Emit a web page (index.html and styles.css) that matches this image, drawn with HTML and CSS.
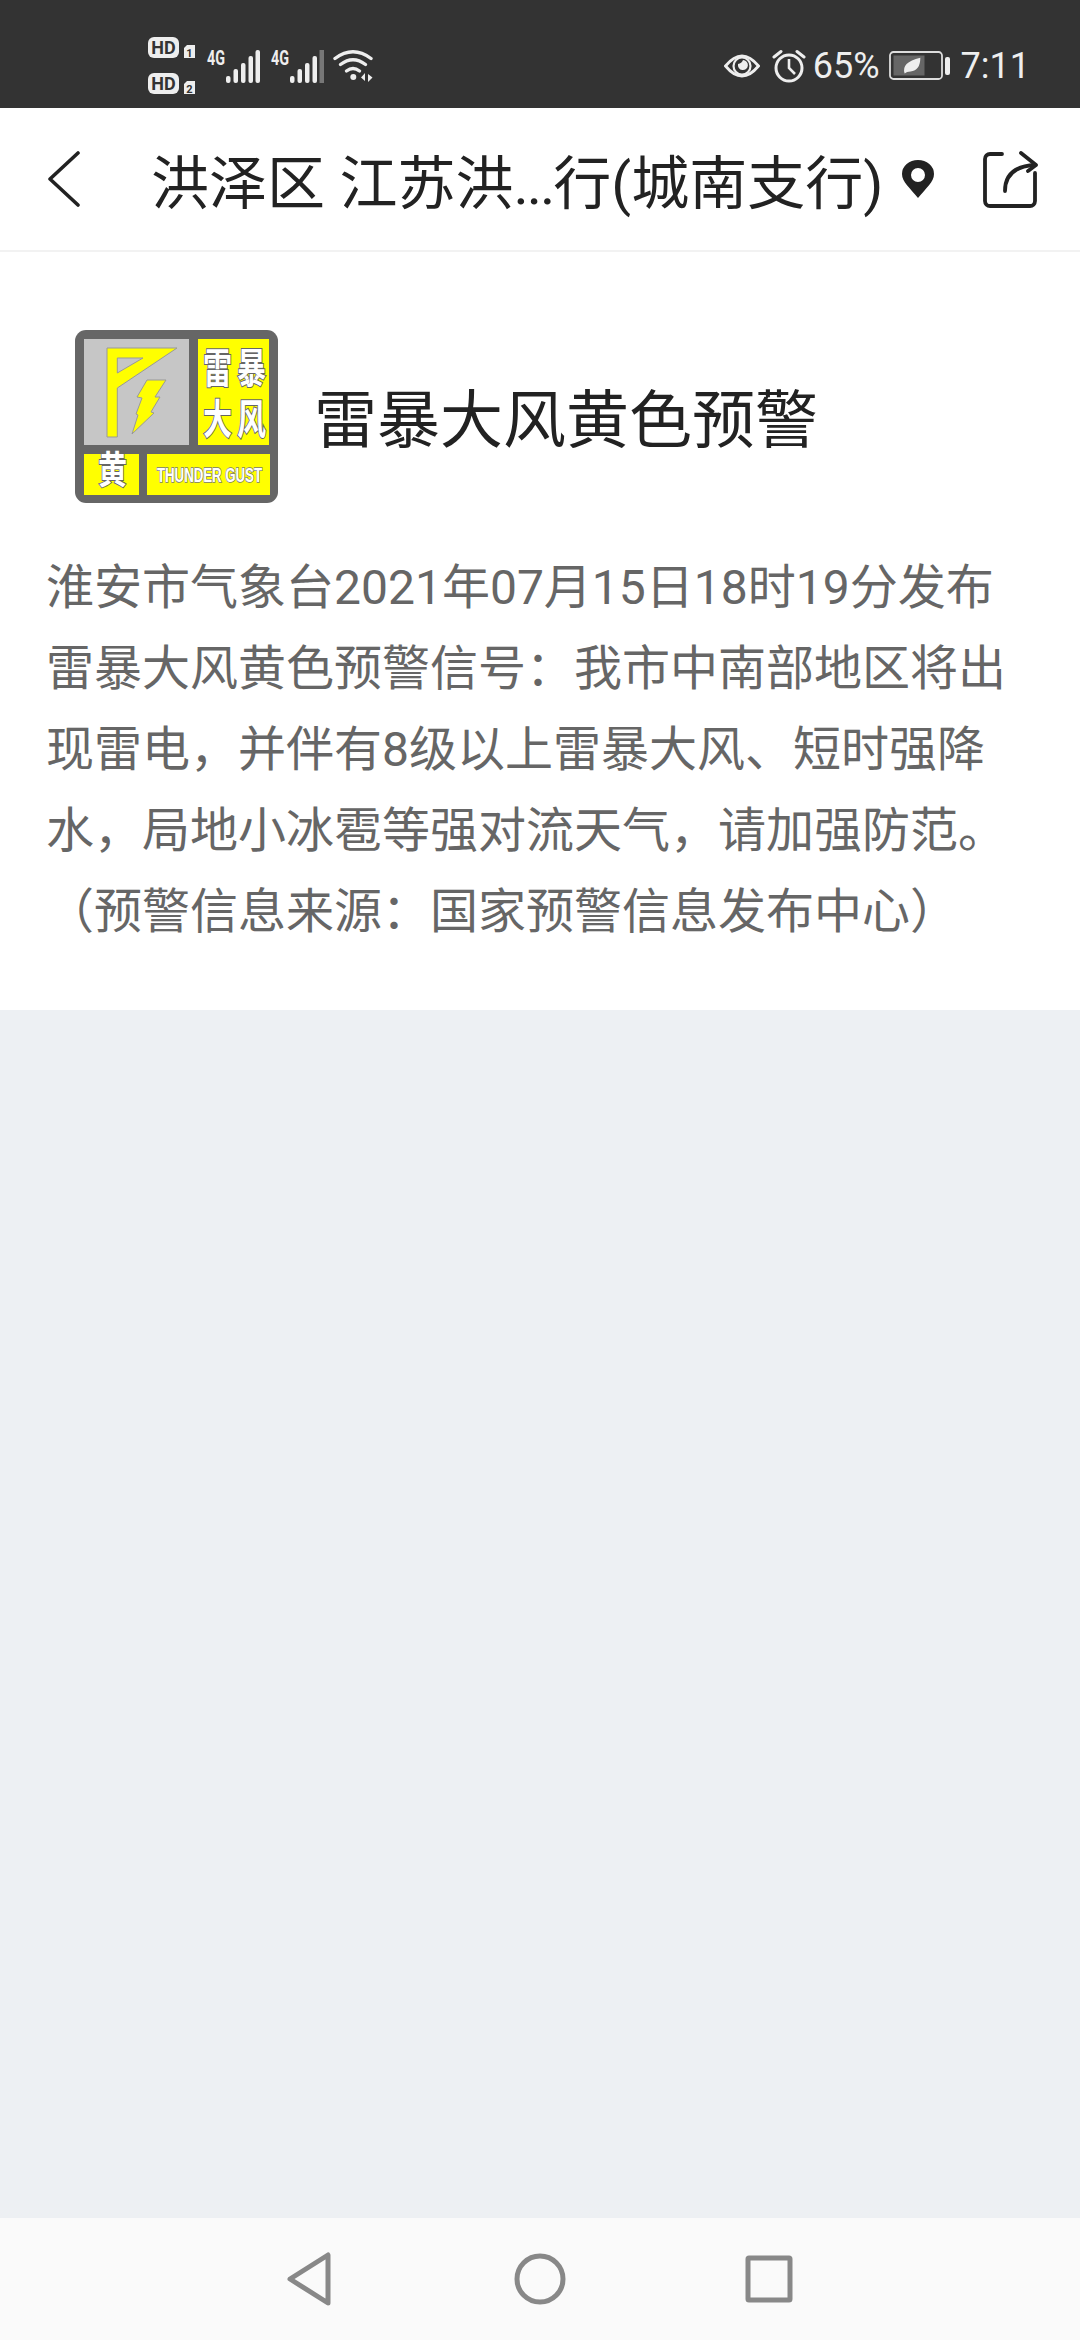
FILE: index.html
```html
<!DOCTYPE html>
<html lang="zh-CN">
<head>
    <meta charset="UTF-8">
    <meta name="viewport" content="width=device-width, initial-scale=1.0">
    <title>雷暴大风黄色预警</title>
    <link rel="stylesheet" href="styles.css">
</head>
<body>
    <div class="page">
        <div class="statusbar">
            <div class="status-left">
                <svg class="ic-hd" width="48" height="60" viewBox="0 0 48 60">
                    <rect x="0" y="1" width="31" height="21" rx="6" fill="#eee"/>
                    <text class="hd-text" x="15.5" y="18">HD</text>
                    <path d="M36 12 l3 -3 h8 v13 h-11z" fill="#eee"/>
                    <text class="hd-num" x="41.5" y="21">1</text>
                    <rect x="0" y="37" width="31" height="21" rx="6" fill="#eee"/>
                    <text class="hd-text" x="15.5" y="54">HD</text>
                    <path d="M36 48 l3 -3 h8 v13 h-11z" fill="#eee"/>
                    <text class="hd-num" x="41.5" y="57">2</text>
                </svg>
                <svg class="ic-signal" width="55" height="40" viewBox="0 0 55 40">
                    <text class="net-text" x="2" y="19" textLength="18" lengthAdjust="spacingAndGlyphs">4G</text>
                    <rect x="21" y="30" width="4.5" height="7" rx="2" fill="#eee"/>
                    <rect x="28.5" y="23" width="4.5" height="14" rx="2" fill="#eee"/>
                    <rect x="36" y="17" width="4.5" height="20" rx="2" fill="#eee"/>
                    <rect x="43.5" y="10" width="4.5" height="27" rx="2" fill="#eee"/>
                    <rect x="50.5" y="4" width="4.5" height="33" rx="2" fill="#eee"/>
                </svg>
                <svg class="ic-signal" width="55" height="40" viewBox="0 0 55 40">
                    <text class="net-text" x="2" y="19" textLength="18" lengthAdjust="spacingAndGlyphs">4G</text>
                    <rect x="21" y="30" width="4.5" height="7" rx="2" fill="#eee"/>
                    <rect x="28.5" y="23" width="4.5" height="14" rx="2" fill="#eee"/>
                    <rect x="36" y="17" width="4.5" height="20" rx="2" fill="#eee"/>
                    <rect x="43.5" y="10" width="4.5" height="27" rx="2" fill="#eee"/>
                    <rect x="50.5" y="4" width="4.5" height="33" fill="#777"/>
                </svg>
                <svg class="ic-wifi" width="42" height="34" viewBox="0 0 42 34" fill="none" stroke="#eee" stroke-width="3.4" stroke-linecap="round">
                    <path d="M2 9.5 Q20 -4 38 9.5"/>
                    <path d="M7.5 15.5 Q20 6 32.5 15.5"/>
                    <path d="M13.5 22 Q20 17 26.5 22"/>
                    <circle cx="20.3" cy="28" r="3" fill="#eee" stroke="none"/>
                    <path d="M32 24 v8 l-4 -3.5z M35 33 v-8 l4.500 3.500z" fill="#eee" stroke="none"/>
                </svg>
            </div>
            <div class="status-right">
                <svg class="ic-eye" width="36" height="28" viewBox="0 0 36 28" fill="none" stroke="#eee" stroke-width="2.8">
                    <path d="M1.500 14 Q18 -6 34.500 14 Q18 34 1.500 14z"/>
                    <circle cx="18" cy="14" r="8.500" stroke-width="2.200"/>
                    <path d="M14 12 a5 5 0 1 0 5 -4 a6 6 0 0 1 -5 4z" fill="#eee" stroke="none"/>
                </svg>
                <svg class="ic-alarm" width="34" height="34" viewBox="0 0 34 34" fill="none" stroke="#eee" stroke-width="3">
                    <circle cx="17" cy="19" r="13"/>
                    <path d="M17 10 v9 l6 6" stroke-width="2.600"/>
                    <path d="M2 8 L9 2.500 M32 8 L25 2.500" stroke-linecap="round"/>
                </svg>
                <span class="status-text percent">65%</span>
                <svg class="ic-battery" width="62" height="30" viewBox="0 0 62 30">
                    <rect x="1" y="1" width="52" height="27" rx="3.500" fill="none" stroke="#ddd" stroke-width="1.800"/>
                    <rect x="4.500" y="4.500" width="31" height="20" fill="#666"/>
                    <path d="M18 23 Q14 12 34 7 Q34 20 24 21 Q20 21 18 23z" transform="translate(-2 0) scale(0.98)" fill="#eee"/>
                    <rect x="56" y="6" width="5" height="18" rx="2" fill="#eee"/>
                </svg>
                <span class="status-text clock">7:11</span>
            </div>
        </div>

        <div class="topbar">
            <svg class="ic-back" width="32" height="56" viewBox="0 0 32 56" fill="none" stroke="#222" stroke-width="3.600" stroke-linecap="round" stroke-linejoin="round">
                <path d="M30 2 L2 28 L30 54"/>
            </svg>
            <div class="topbar-title">洪泽区 江苏洪<span class="dots">...</span>行(城南支行)</div>
            <svg class="ic-pin" width="34" height="38" viewBox="0 0 34 38">
                <path fill-rule="evenodd" fill="#222" d="M17 38 C9 28 1 22 1 14 A16 14 0 0 1 33 14 C33 22 25 28 17 38z M17 8 A7 7 0 1 0 17 22 A7 7 0 1 0 17 8z"/>
            </svg>
            <svg class="ic-share" width="56" height="57" viewBox="0 0 56 57" fill="none" stroke="#222" stroke-width="3.800" stroke-linecap="round" stroke-linejoin="round">
                <path d="M19 3 H7 a5 5 0 0 0 -5 5 V50 a5 5 0 0 0 5 5 H47 a5 5 0 0 0 5 -5 V22"/>
                <path d="M22 40 C22 24 32 15 52 14"/>
                <path d="M38 2 L53 14 L45 20"/>
            </svg>
        </div>

        <div class="alert">
            <div class="alert-head">
                <svg class="alert-icon" width="203" height="173" viewBox="0 0 203 173">
                    <rect width="203" height="173" rx="11" fill="#666"/>
                    <rect x="9" y="9" width="105" height="106" fill="#c6c6c6"/>
                    <rect x="123" y="9" width="71" height="106" fill="#ffff00"/>
                    <rect x="9" y="124" width="55" height="41" fill="#ffff00"/>
                    <rect x="72" y="124" width="123" height="41" fill="#ffff00"/>
                    <path fill="#ffff00" stroke="#999" stroke-width="1" fill-rule="evenodd" d="M32 18 H102 L42.300 58 V107 H32z M42.300 28 V43 L68 28z"/>
                    <path fill="#ffff00" stroke="#999" stroke-width="1" d="M72 50 H91 L80 67 H85 L76 82 L79 83 L57 104 L63 85 L61 84 L67 68 L62 67z"/>
                    <g class="sign-cn">
                        <text transform="translate(128 53) scale(1 1.400)">雷</text>
                        <text transform="translate(162 53) scale(1 1.400)">暴</text>
                        <text transform="translate(128 104) scale(1 1.400)">大</text>
                        <text transform="translate(162 104) scale(1 1.400)">风</text>
                        <text transform="translate(23 153) scale(1 1.300)">黄</text>
                    </g>
                    <text class="sign-en" x="82" y="152" textLength="105" lengthAdjust="spacingAndGlyphs">THUNDER GUST</text>
                </svg>
                <h1 class="alert-title">雷暴大风黄色预警</h1>
            </div>
            <p class="alert-body">淮安市气象台2021年07月15日18时19分发布雷暴大风黄色预警信号：我市中南部地区将出现雷电，并伴有8级以上雷暴大风、短时强降水，局地小冰雹等强对流天气，请加强防范。（预警信息来源：国家预警信息发布中心）</p>
        </div>

        <div class="filler"></div>

        <div class="navbar">
            <svg class="nav-back" width="44" height="54" viewBox="0 0 44 54" fill="none" stroke="#888" stroke-width="5" stroke-linejoin="round">
                <path d="M3 27 L41 3 V51z"/>
            </svg>
            <svg width="52" height="52" viewBox="0 0 52 52" fill="none" stroke="#888" stroke-width="5">
                <circle cx="26" cy="26" r="23"/>
            </svg>
            <svg class="nav-recent" width="48" height="48" viewBox="0 0 48 48" fill="none" stroke="#888" stroke-width="5" stroke-linejoin="round">
                <rect x="3" y="3" width="42" height="42" rx="1"/>
            </svg>
        </div>
    </div>
</body>
</html>
```

FILE: styles.css
```css
body {
    margin: 0;
    font-family: Roboto, "Noto Sans CJK SC", sans-serif;
    background: #fff;
}
.page {
    display: flex;
    flex-direction: column;
    width: 1080px;
    height: 2340px;
    overflow: hidden;
}

/* status bar */
.statusbar {
    display: flex;
    justify-content: space-between;
    align-items: center;
    box-sizing: border-box;
    height: 108px;
    padding: 24px 50px 0 148px;
    background: #333;
    color: #eee;
}
.status-left, .status-right {
    display: flex;
    align-items: center;
}
.status-left {
    gap: 9px;
}
.status-right {
    gap: 7px;
}
.ic-alarm {
    margin-left: 5px;
}
.status-text {
    font-size: 36px;
    line-height: 40px;
}
.ic-battery {
    margin-left: 2px;
}
.clock {
    margin-left: 3px;
}
.hd-text {
    font-size: 18px;
    font-weight: 700;
    fill: #333;
    text-anchor: middle;
}
.hd-num {
    font-size: 11px;
    font-weight: 700;
    fill: #333;
    text-anchor: middle;
}
.net-text {
    font-size: 20px;
    font-weight: 700;
    fill: #eee;
}

/* top bar */
.topbar {
    display: flex;
    align-items: center;
    box-sizing: border-box;
    height: 144px;
    padding-left: 48px;
    border-bottom: 2px solid #f2f2f2;
}
.topbar-title {
    margin-left: 71px;
    font-size: 58px;
    color: #222;
    white-space: nowrap;
}
.dots {
    letter-spacing: -2px;
}
.ic-pin {
    margin-left: 18px;
}
.ic-share {
    margin-left: 48px;
}

/* alert */
.alert {
    box-sizing: border-box;
    height: 758px;
    padding: 78px 64px 0 46px;
    background: #fff;
}
.alert-head {
    display: flex;
    align-items: center;
    margin-left: 29px;
}
.alert-title {
    margin: 0 0 4px 36px;
    font-size: 63px;
    font-weight: 400;
    color: #222;
}
.alert-icon {
    flex: none;
    overflow: visible;
}
.sign-cn text {
    font-size: 29px;
    font-weight: 700;
    fill: #fff;
    stroke: #666;
    stroke-width: 1.500;
    paint-order: stroke;
}
.sign-en {
    font-family: "Liberation Sans", sans-serif;
    font-size: 20px;
    font-weight: 700;
    fill: #fff;
    stroke: #777;
    stroke-width: 1.500;
    paint-order: stroke;
}
.alert-body {
    margin: 44px 0 0;
    font-size: 48px;
    line-height: 81px;
    color: #666;
    text-spacing-trim: space-all;
}

.filler {
    flex: 1;
    background: #edf0f3;
}

/* bottom nav */
.navbar {
    display: flex;
    justify-content: center;
    align-items: center;
    gap: 180px;
    height: 122px;
    background: #fafafa;
}
.nav-back {
    margin-right: 3px;
}
.nav-recent {
    margin-left: -1px;
}
```
